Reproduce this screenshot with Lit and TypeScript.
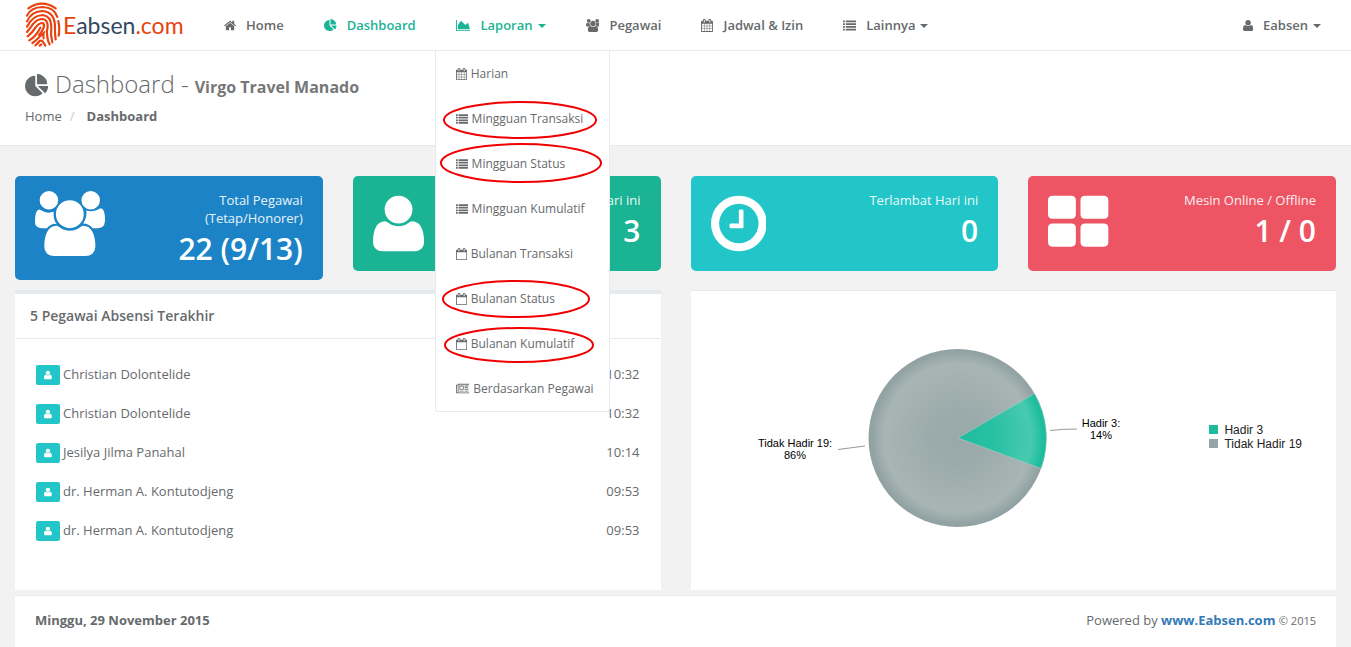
import { LitElement, html, css, svg, nothing } from "lit";
import { customElement, property, state } from "lit/decorators.js";
import { classMap } from "lit/directives/class-map.js";

interface Glyph {
  box: string;
  ratio: number;
  d: string;
}

const calendarFrame =
  "m384-64v1280q0 52-38 90t-90 38h-1408q-52 0-90-38t-38-90v-1280q0-52 38-90t90-38h128v-96q0-66 47-113t113-47h64q66 0 113 47t47 113v96h384v-96q0-66 47-113t113-47h64q66 0 113 47t47 113v96h128q52 0 90 38t38 90z";

const GLYPHS: Record<string, Glyph> = {
  home: {
    box: "64 0 1664 1792",
    ratio: 1664 / 1792,
    d: "M1472 992v480q0 26-19 45t-45 19h-384v-384h-256v384h-384q-26 0-45-19t-19-45v-480q0-1 .5-3t.5-3l575-474 575 474q1 2 1 6zm223-69l-62 74q-8 9-21 11h-3q-13 0-21-7l-692-577-692 577q-12 8-24 7-13-2-21-11l-62-74q-8-10-7-23.5t11-21.5l719-599q32-26 76-26t76 26l244 204v-195q0-14 9-23t23-9h192q14 0 23 9t9 23v408l219 182q10 8 11 21.5t-7 23.5z",
  },
  pie: {
    box: "0 0 1792 1792",
    ratio: 1,
    d: "M768 890l546 546q-106 108-247.5 168t-298.5 60q-209 0-385.5-103t-279.5-279.5-103-385.5 103-385.5 279.5-279.5 385.5-103v762zm187 6h773q0 157-60 298.5t-168 247.5zm709-128h-768v-768q209 0 385.5 103t279.5 279.5 103 385.5z",
  },
  area: {
    box: "0 0 2048 1792",
    ratio: 2048 / 1792,
    d: "M2048 1536v128h-2048v-1536h128v1408h1920zm-384-1024l256 896h-1664v-576l448-576 576 576z",
  },
  user: {
    box: "192 0 1408 1792",
    ratio: 1408 / 1792,
    d: "M1600 1405q0 120-73 189.5t-194 69.5h-874q-121 0-194-69.5t-73-189.5q0-53 3.5-103.5t14-109 26.5-108.5 43-97.5 62-81 85.5-53.5 111.5-20q9 0 42 21.5t74.5 48 108 48 133.5 21.5 133.5-21.5 108-48 74.5-48 42-21.5q61 0 111.5 20t85.5 53.5 62 81 43 97.5 26.5 108.5 14 109 3.5 103.5zm-320-893q0 159-112.5 271.5t-271.5 112.5-271.5-112.5-112.5-271.5 112.5-271.5 271.5-112.5 271.5 112.5 112.5 271.5z",
  },
  users: {
    box: "64 0 1920 1792",
    ratio: 1920 / 1792,
    d: "M657 896q-162 5-265 128h-134q-82 0-138-40.5t-56-118.5q0-353 124-353 6 0 43.5 21t97.5 42.5 119 21.5q67 0 133-23-5 37-5 66 0 159 93 294zm1071 637q0 120-73 189.5t-194 69.5h-874q-121 0-194-69.5t-73-189.5q0-53 3.5-103.5t14-109 26.5-108.5 43-97.5 62-81 85.5-53.5 111.5-20q10 0 43 21.5t73 48 107 48 135 21.5 135-21.5 107-48 73-48 43-21.5q61 0 111.5 20t85.5 53.5 62 81 43 97.5 26.5 108.5 14 109 3.5 103.5zm-1024-1277q0 106-75 181t-181 75-181-75-75-181 75-181 181-75 181 75 75 181zm704 384q0 159-112.5 271.5t-271.5 112.5-271.5-112.5-112.5-271.5 112.5-271.5 271.5-112.5 271.5 112.5 112.5 271.5zm576 225q0 78-56 118.5t-138 40.5h-134q-103-123-265-128 93-135 93-294 0-29-5-66 66 23 133 23 59 0 119-21.5t97.5-42.5 43.5-21q124 0 124 353zm-128-609q0 106-75 181t-181 75-181-75-75-181 75-181 181-75 181 75 75 181z",
  },
  calendar: {
    box: "64 0 1664 1792",
    ratio: 1664 / 1792,
    d:
      "M192 1664h288v-288h-288v288zm352 0h320v-288h-320v288zm-352-352h288v-320h-288v320zm352 0h320v-320h-320v320zm-352-384h288v-288h-288v288zm736 736h320v-288h-320v288zm-384-736h320v-288h-320v288zm768 736h288v-288h-288v288zm-384-352h320v-320h-320v320zm-352-864v-288q0-13-9.5-22.5t-22.5-9.5h-64q-13 0-22.5 9.5t-9.5 22.5v288q0 13 9.5 22.5t22.5 9.5h64q13 0 22.5-9.5t9.5-22.5zm736 864h288v-320h-288v320zm-384-384h320v-288h-320v288zm384 0h288v-288h-288v288zm32-480v-288q0-13-9.5-22.5t-22.5-9.5h-64q-13 0-22.5 9.5t-9.5 22.5v288q0 13 9.5 22.5t22.5 9.5h64q13 0 22.5-9.5t9.5-22.5z" +
      calendarFrame,
  },
  calendarBlank: {
    box: "64 0 1664 1792",
    ratio: 1664 / 1792,
    d:
      "M192 1664h1408v-1024h-1408v1024zm384-1216v-288q0-14-9-23t-23-9h-64q-14 0-23 9t-9 23v288q0 14 9 23t23 9h64q14 0 23-9t9-23zm768 0v-288q0-14-9-23t-23-9h-64q-14 0-23 9t-9 23v288q0 14 9 23t23 9h64q14 0 23-9t9-23z" +
      calendarFrame,
  },
  list: {
    box: "0 0 1792 1792",
    ratio: 1,
    d: "M0 192h256v256H0zM384 192h1408v256H384zM0 576h256v256H0zM384 576h1408v256H384zM0 960h256v256H0zM384 960h1408v256H384zM0 1344h256v256H0zM384 1344h1408v256H384z",
  },
  clock: {
    box: "128 0 1536 1792",
    ratio: 1536 / 1792,
    d: "M1024 544v448q0 14-9 23t-23 9h-320q-14 0-23-9t-9-23v-64q0-14 9-23t23-9h224v-352q0-14 9-23t23-9h64q14 0 23 9t9 23zM896 128a768 768 0 1 0 0 1536a768 768 0 1 0 0-1536zM896 352a544 544 0 1 1 0 1088a544 544 0 1 1 0-1088z",
  },
  grid: {
    box: "0 0 1664 1792",
    ratio: 1664 / 1792,
    d: "M128 128h512q128 0 128 128v384q0 128-128 128H128Q0 768 0 640V256Q0 128 128 128zM1024 128h512q128 0 128 128v384q0 128-128 128h-512q-128 0-128-128V256q0-128 128-128zM128 896h512q128 0 128 128v384q0 128-128 128H128Q0 1536 0 1408v-384Q0 896 128 896zM1024 896h512q128 0 128 128v384q0 128-128 128h-512q-128 0-128-128v-384q0-128 128-128z",
  },
  news: {
    box: "0 0 2048 1792",
    ratio: 2048 / 1792,
    d: "M1024 512h-384v384h384v-384zm128 640v128h-640v-128h640zm0-768v640h-640v-640h640zm640 768v128h-512v-128h512zm0-256v128h-512v-128h512zm0-256v128h-512v-128h512zm0-256v128h-512v-128h512zm-1536 960v-960h-128v960q0 26 19 45t45 19 45-19 19-45zm1664 0v-1088h-1536v1088q0 33-11 64h1483q26 0 45-19t19-45zm128-1216v1216q0 80-56 136t-136 56h-1664q-80 0-136-56t-56-136v-1088h256v-128h1792z",
  },
};

@customElement("app-icon")
export class AppIcon extends LitElement {
  @property() name = "home";
  @property({ type: Number }) size = 13;

  static styles = css`
    :host {
      display: inline-block;
      flex: none;
      line-height: 0;
    }
    .glyph {
      display: block;
      fill: currentColor;
    }
  `;

  render() {
    const glyph = GLYPHS[this.name];
    return html`<svg
      class="glyph"
      width=${this.size * glyph.ratio}
      height=${this.size}
      viewBox=${glyph.box}
      aria-hidden="true"
    >
      <path d=${glyph.d}></path>
    </svg>`;
  }
}

@customElement("attendance-chart")
export class AttendanceChart extends LitElement {
  static styles = css`
    :host {
      display: flex;
      align-items: center;
      justify-content: space-between;
      padding: 0 34px 0 64px;
      font-family: "Liberation Sans", Arial, sans-serif;
    }
    .pie {
      display: block;
      flex: none;
    }
    .label {
      font-size: 11px;
      fill: #000;
      text-anchor: middle;
    }
    .leader {
      fill: none;
      stroke: #999;
    }
    .legend {
      list-style: none;
      margin: 0;
      padding: 0 0 8px;
      font-size: 12px;
      line-height: 14px;
      color: #222;
    }
    .entry {
      display: flex;
      align-items: center;
      gap: 6px;
    }
    .swatch {
      width: 9px;
      height: 9px;
    }
    .present {
      background: #1abc9c;
    }
    .absent {
      background: #95a5a6;
    }
  `;

  render() {
    return html`
      <svg class="pie" width="368" height="192" viewBox="0 0 368 192" role="img" aria-label="Kehadiran hari ini">
        <defs>
          <radialGradient id="grey" gradientUnits="userSpaceOnUse" cx="203" cy="93" r="89">
            <stop offset="0" stop-color="#99a8a8"></stop>
            <stop offset="0.3" stop-color="#9baaaa"></stop>
            <stop offset="0.83" stop-color="#a8b5b5"></stop>
            <stop offset="0.96" stop-color="#94a4a4"></stop>
            <stop offset="1" stop-color="#90a1a1"></stop>
          </radialGradient>
          <radialGradient id="green" gradientUnits="userSpaceOnUse" cx="203" cy="93" r="89">
            <stop offset="0" stop-color="#1fbd9e"></stop>
            <stop offset="0.4" stop-color="#27c0a2"></stop>
            <stop offset="0.82" stop-color="#48cab0"></stop>
            <stop offset="0.96" stop-color="#1dbd9d"></stop>
            <stop offset="1" stop-color="#1abc9c"></stop>
          </radialGradient>
        </defs>
        <circle cx="202.500" cy="93" r="89" fill="url(#grey)"></circle>
        <path
          d="M203 93L279.500 48.500A89 89 0 0 1 286 123.500Z"
          fill="url(#green)"
          stroke="#c4cdcd"
          stroke-width="0.500"
        ></path>
        <path class="leader" d="M83 104.500L110 101"></path>
        <path class="leader" d="M295 85.500Q306 84 322 84"></path>
        <text class="label" x="40" y="102">Tidak Hadir 19:</text>
        <text class="label" x="40" y="114">86%</text>
        <text class="label" x="346" y="82">Hadir 3:</text>
        <text class="label" x="346" y="94">14%</text>
      </svg>
      <ul class="legend">
        <li class="entry"><span class="swatch present"></span>Hadir 3</li>
        <li class="entry"><span class="swatch absent"></span>Tidak Hadir 19</li>
      </ul>
    `;
  }
}

const NAV = [
  { icon: "home", text: "Home" },
  { icon: "pie", text: "Dashboard", active: true },
  { icon: "area", text: "Laporan", active: true, caret: true, menu: true },
  { icon: "users", text: "Pegawai" },
  { icon: "calendar", text: "Jadwal & Izin" },
  { icon: "list", text: "Lainnya", caret: true },
];

const REPORTS = [
  ["calendar", "Harian"],
  ["list", "Mingguan Transaksi"],
  ["list", "Mingguan Status"],
  ["list", "Mingguan Kumulatif"],
  ["calendarBlank", "Bulanan Transaksi"],
  ["calendarBlank", "Bulanan Status"],
  ["calendarBlank", "Bulanan Kumulatif"],
  ["news", "Berdasarkan Pegawai"],
];

// Hand-marked menu entries: centre and radii inside the report menu.
const MARKS = [
  [84, 69, 76, 18],
  [85, 112, 80, 19],
  [80, 248, 73, 18],
  [83, 294, 74, 17],
];

const STATS = [
  { tone: "blue", icon: "users", lines: ["Total Pegawai", "(Tetap/Honorer)"], value: "22 (9/13)" },
  { tone: "green", icon: "user", lines: ["Hadir Hari ini"], value: "3" },
  { tone: "cyan", icon: "clock", lines: ["Terlambat Hari ini"], value: "0" },
  { tone: "red", icon: "grid", lines: ["Mesin Online / Offline"], value: "1 / 0" },
];

const LATEST = [
  ["Christian Dolontelide", "10:32"],
  ["Christian Dolontelide", "10:32"],
  ["Jesilya Jilma Panahal", "10:14"],
  ["dr. Herman A. Kontutodjeng", "09:53"],
  ["dr. Herman A. Kontutodjeng", "09:53"],
];

@customElement("app-root")
export class AppRoot extends LitElement {
  @state() private menuOpen = true;

  static styles = css`
    :host {
      display: flex;
      flex-direction: column;
      min-height: 100vh;
      box-sizing: border-box;
      background: #f2f2f2;
      color: #676a6c;
      font-family: "Open Sans", "Noto Sans", sans-serif;
      font-size: 13px;
      line-height: 18px;
    }
    a {
      color: inherit;
      text-decoration: none;
    }
    .topbar {
      display: flex;
      align-items: stretch;
      height: 50px;
      padding: 0 10px 0 25px;
      background: #fff;
      border-bottom: 1px solid #e7eaec;
    }
    .brand {
      display: flex;
      align-items: center;
      gap: 2px;
      width: 179px;
      font-family: Lato, sans-serif;
      font-size: 23px;
      color: #34495e;
    }
    .finger {
      flex: none;
      fill: none;
      stroke: #e8420e;
      stroke-width: 6.5;
      stroke-linecap: round;
    }
    .accent {
      color: #e8420e;
    }
    .nav {
      display: flex;
      flex: 1;
      list-style: none;
      margin: 0;
      padding: 0;
    }
    .item {
      position: relative;
      display: flex;
    }
    .item.account {
      margin-left: auto;
    }
    .link {
      display: flex;
      align-items: center;
      gap: 10px;
      padding: 0 20px;
      border: 0;
      background: none;
      font: inherit;
      font-weight: 600;
      color: inherit;
      cursor: pointer;
      white-space: nowrap;
    }
    .link.active {
      color: #1ab394;
    }
    .caption {
      display: flex;
      align-items: center;
      gap: 5px;
    }
    .caret {
      border: 4px solid transparent;
      border-top-color: currentColor;
      border-bottom: 0;
      margin-top: 2px;
    }
    .menu {
      position: absolute;
      z-index: 5;
      top: 51px;
      left: -1px;
      background: #fff;
      border: 1px solid #e7eaec;
      border-top: 0;
      border-radius: 0 0 3px 3px;
    }
    .entries {
      list-style: none;
      margin: 0;
      padding: 0;
    }
    .entry {
      display: flex;
      align-items: center;
      gap: 4px;
      height: 45px;
      padding: 0 15px 0 20px;
      font-size: 12px;
      white-space: nowrap;
    }
    .marks {
      position: absolute;
      top: 0;
      left: 0;
      overflow: visible;
      pointer-events: none;
      fill: none;
      stroke: #f00000;
      stroke-width: 2;
    }
    .heading {
      padding: 18px 25px 20px;
      background: #fff;
      border-bottom: 1px solid #e7eaec;
    }
    .title {
      display: flex;
      align-items: baseline;
      gap: 6px;
      margin: 0;
      font-size: 24px;
      line-height: 30px;
      font-weight: 300;
    }
    .title .icon {
      align-self: center;
    }
    .company {
      font-size: 16px;
      font-weight: 700;
      color: #777;
    }
    .crumbs {
      display: flex;
      list-style: none;
      margin: 5px 0 0;
      padding: 0;
    }
    .slash {
      padding: 0 12px 0 8px;
      color: #ccc;
    }
    .here {
      font-weight: 700;
    }
    .content {
      flex: 1;
      display: flex;
      flex-direction: column;
      padding: 30px 15px 0;
    }
    .stats {
      display: grid;
      grid-template-columns: repeat(4, 1fr);
      gap: 30px;
      align-items: start;
    }
    .stat {
      display: flex;
      justify-content: space-between;
      align-items: flex-start;
      padding: 15px 20px;
      border-radius: 5px;
      color: #fff;
      text-align: right;
    }
    .blue {
      background: #1c84c6;
    }
    .green {
      background: #1ab394;
    }
    .cyan {
      background: #23c6c8;
    }
    .red {
      background: #ed5565;
    }
    .statlabel {
      display: block;
      opacity: 0.9;
    }
    .value {
      margin: 5px 0 0;
      font-size: 30px;
      line-height: 33px;
      font-weight: 600;
    }
    .panels {
      display: grid;
      grid-template-columns: 1fr 1fr;
      gap: 30px;
      margin-top: 10px;
    }
    .panel {
      background: #fff;
      border-top: 1px solid #e7eaec;
    }
    .panel.thick {
      border-top-width: 4px;
    }
    .panel.chart {
      display: grid;
    }
    .paneltitle {
      margin: 0;
      padding: 13px 15px;
      border-bottom: 1px solid #e7eaec;
      font-size: 14px;
      line-height: 18px;
      font-weight: 600;
    }
    .latest {
      padding: 15px 21px 41px;
    }
    .table {
      width: 100%;
      border-collapse: collapse;
    }
    .table td {
      height: 39px;
      padding: 0;
    }
    .table .time {
      text-align: right;
    }
    .person {
      display: flex;
      align-items: center;
      gap: 3px;
    }
    .badge {
      display: flex;
      align-items: center;
      justify-content: center;
      width: 24px;
      height: 20px;
      margin-top: 2px;
      border-radius: 2px;
      background: #23c6c8;
      color: #fff;
    }
    .footer {
      flex: 1;
      display: flex;
      justify-content: space-between;
      align-items: flex-start;
      margin-top: 5px;
      padding: 15px 20px;
      background: #fff;
      border-top: 1px solid #e7eaec;
    }
    .site {
      font-weight: 700;
      color: #337ab7;
    }
    .copy {
      font-size: 11px;
    }
  `;

  private toggleMenu() {
    this.menuOpen = !this.menuOpen;
  }

  private renderMenu() {
    return html`<div class="menu">
      <ul class="entries">
        ${REPORTS.map(
          ([icon, text]) => html`<li>
            <a class="entry" href="#"><app-icon name=${icon} size="12"></app-icon>${text}</a>
          </li>`
        )}
      </ul>
      <svg class="marks" width="1" height="1" aria-hidden="true">
        ${MARKS.map(
          ([cx, cy, rx, ry]) => svg`<ellipse cx=${cx} cy=${cy} rx=${rx} ry=${ry}></ellipse>`
        )}
      </svg>
    </div>`;
  }

  private renderNavItem(item: (typeof NAV)[number]) {
    const body = html`<app-icon name=${item.icon}></app-icon
      ><span class="caption"
        >${item.text}${item.caret ? html`<span class="caret"></span>` : nothing}</span
      >`;
    const cls = classMap({ link: true, active: !!item.active });
    return html`<li class="item">
      ${item.caret
        ? html`<button
            class=${cls}
            type="button"
            aria-expanded=${item.menu && this.menuOpen ? "true" : "false"}
            @click=${item.menu ? this.toggleMenu : nothing}
          >
            ${body}
          </button>`
        : html`<a class=${cls} href="#">${body}</a>`}
      ${item.menu && this.menuOpen ? this.renderMenu() : nothing}
    </li>`;
  }

  render() {
    return html`
      <header class="topbar">
        <a class="brand" href="#">
          <svg class="finger" width="36" height="46" viewBox="75 5 108 138" aria-hidden="true">
            <path d="M85 24Q126-4 167 24"></path>
            <path d="M81 46Q92 21 128 20Q164 22 172 50"></path>
            <path d="M81 63Q94 33 128 32Q164 35 165 78Q164 98 167 117"></path>
            <path d="M175 62Q180 84 176 106"></path>
            <path d="M81 79Q98 45 128 44Q153 47 154 78Q151 104 157 126"></path>
            <path d="M81 95Q92 82 100 70Q112 56 128 56Q143 58 143 78Q139 96 142 110Q143 122 149 132"></path>
            <path d="M83 108Q98 96 107 81Q116 68 128 68Q134 70 131 82Q127 94 117 104"></path>
            <path d="M88 120Q108 108 121 82"></path>
            <path d="M97 128Q106 122 113 115Q126 102 131 98Q129 106 131 114"></path>
            <path d="M106 135Q113 130 119 122Q126 118 130 126L136 136"></path>
            <path d="M119 136L124 132"></path>
          </svg>
          <span><span class="accent">E</span>absen<span class="accent">.com</span></span>
        </a>
        <ul class="nav">
          ${NAV.map((item) => this.renderNavItem(item))}
          <li class="item account">
            <button class="link" type="button" aria-expanded="false">
              <app-icon name="user"></app-icon>
              <span class="caption">Eabsen<span class="caret"></span></span>
            </button>
          </li>
        </ul>
      </header>

      <section class="heading">
        <h1 class="title">
          <app-icon class="icon" name="pie" size="24"></app-icon>
          <span>Dashboard -</span>
          <span class="company">Virgo Travel Manado</span>
        </h1>
        <ol class="crumbs">
          <li><a href="#">Home</a></li>
          <li class="slash" aria-hidden="true">/</li>
          <li class="here">Dashboard</li>
        </ol>
      </section>

      <main class="content">
        <div class="stats">
          ${STATS.map(
            (stat) => html`<section class="stat ${stat.tone}">
              <app-icon name=${stat.icon} size="65"></app-icon>
              <div>
                ${stat.lines.map((line) => html`<span class="statlabel">${line}</span>`)}
                <h2 class="value">${stat.value}</h2>
              </div>
            </section>`
          )}
        </div>

        <div class="panels">
          <section class="panel thick">
            <h2 class="paneltitle">5 Pegawai Absensi Terakhir</h2>
            <div class="latest">
              <table class="table">
                <tbody>
                  ${LATEST.map(
                    ([name, time]) => html`<tr>
                      <td>
                        <div class="person">
                          <span class="badge"><app-icon name="user" size="10"></app-icon></span>${name}
                        </div>
                      </td>
                      <td class="time">${time}</td>
                    </tr>`
                  )}
                </tbody>
              </table>
            </div>
          </section>
          <section class="panel chart"><attendance-chart></attendance-chart></section>
        </div>

        <footer class="footer">
          <strong>Minggu, 29 November 2015</strong>
          <span>Powered by <a class="site" href="#">www.Eabsen.com</a> <span class="copy">© 2015</span></span>
        </footer>
      </main>
    `;
  }
}
